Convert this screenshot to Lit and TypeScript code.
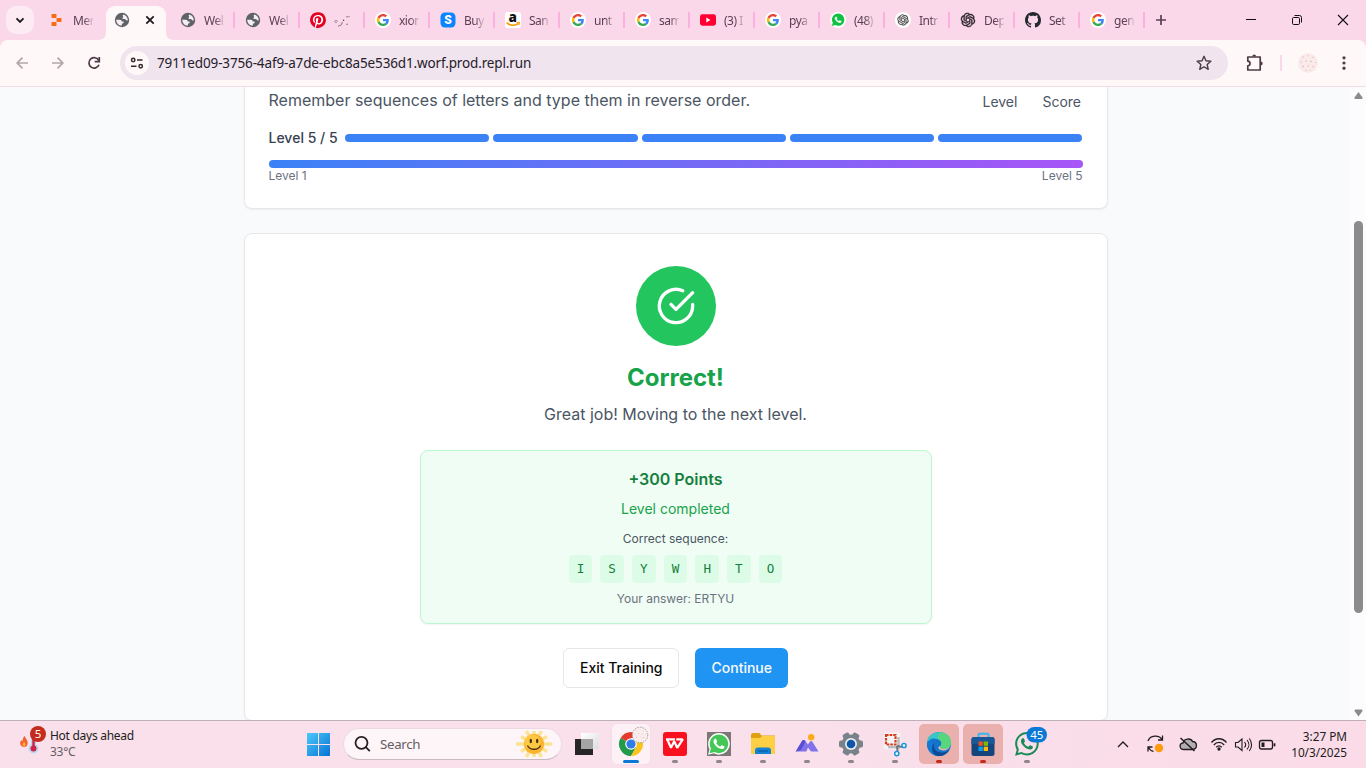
import { LitElement, html, css, svg, TemplateResult } from "lit";
import { customElement } from "lit/decorators.js";

const WA =
  "M17.472 14.382c-.297-.149-1.758-.867-2.03-.967-.273-.099-.471-.148-.67.15-.197.297-.767.966-.94 1.164-.173.199-.347.223-.644.075-.297-.15-1.255-.463-2.39-1.475-.883-.788-1.48-1.761-1.653-2.059-.173-.297-.018-.458.13-.606.134-.133.298-.347.446-.52.149-.174.198-.298.298-.497.099-.198.05-.371-.025-.52-.075-.149-.669-1.612-.916-2.207-.242-.579-.487-.5-.669-.51-.173-.008-.371-.01-.57-.01-.198 0-.52.074-.792.372-.272.297-1.04 1.016-1.04 2.479 0 1.462 1.065 2.875 1.213 3.074.149.198 2.096 3.2 5.077 4.487.709.306 1.262.489 1.694.625.712.227 1.36.195 1.871.118.571-.085 1.758-.719 2.006-1.413.248-.694.248-1.289.173-1.413-.074-.124-.272-.198-.57-.347";
const WA_RING =
  "m-5.421 7.403h-.004a9.87 9.87 0 01-5.031-1.378l-.361-.214-3.741.982.998-3.648-.235-.374a9.86 9.86 0 01-1.51-5.26c.001-5.45 4.436-9.884 9.888-9.884 2.64 0 5.122 1.03 6.988 2.898a9.825 9.825 0 012.893 6.994c-.003 5.45-4.437 9.884-9.885 9.884m8.413-18.297A11.815 11.815 0 0012.05 0C5.495 0 .16 5.335.157 11.892c0 2.096.547 4.142 1.588 5.945L.057 24l6.305-1.654a11.882 11.882 0 005.683 1.448h.005c6.554 0 11.89-5.335 11.893-11.893a11.821 11.821 0 00-3.48-8.413z";
const WA_BODY =
  "M12.05 0C5.495 0 .16 5.335.157 11.892c0 2.096.547 4.142 1.588 5.945L.057 24l6.305-1.654a11.882 11.882 0 005.688 1.448c6.554 0 11.89-5.335 11.893-11.893A11.821 11.821 0 0012.05 0z";
const OPENAI =
  "M22.2819 9.8211a5.9847 5.9847 0 0 0-.5157-4.9108 6.0462 6.0462 0 0 0-6.5098-2.9A6.0651 6.0651 0 0 0 4.9807 4.1818a5.9847 5.9847 0 0 0-3.9977 2.9 6.0462 6.0462 0 0 0 .7427 7.0966 5.98 5.98 0 0 0 .511 4.9107 6.051 6.051 0 0 0 6.5146 2.9001A5.9847 5.9847 0 0 0 13.2599 24a6.0557 6.0557 0 0 0 5.7718-4.2058 5.9894 5.9894 0 0 0 3.9977-2.9001 6.0557 6.0557 0 0 0-.7475-7.073zm-9.022 12.6081a4.4755 4.4755 0 0 1-2.8764-1.0408l.1419-.0804 4.7783-2.7582a.7948.7948 0 0 0 .3927-.6813v-6.7369l2.02 1.1686a.071.071 0 0 1 .038.052v5.5826a4.504 4.504 0 0 1-4.4945 4.4944zm-9.6607-4.1254a4.4708 4.4708 0 0 1-.5346-3.0137l.142.0852 4.783 2.7582a.7712.7712 0 0 0 .7806 0l5.8428-3.3685v2.3324a.0804.0804 0 0 1-.0332.0615L9.74 19.9502a4.4992 4.4992 0 0 1-6.1408-1.6464zM2.3408 7.8956a4.485 4.485 0 0 1 2.3655-1.9728V11.6a.7664.7664 0 0 0 .3879.6765l5.8144 3.3543-2.0201 1.1685a.0757.0757 0 0 1-.071 0l-4.8303-2.7865A4.504 4.504 0 0 1 2.3408 7.872zm16.5963 3.8558L13.1038 8.364 15.1192 7.2a.0757.0757 0 0 1 .071 0l4.8303 2.7913a4.4944 4.4944 0 0 1-.6765 8.1042v-5.6772a.79.79 0 0 0-.407-.667zm2.0107-3.0231l-.142-.0852-4.7735-2.7818a.7759.7759 0 0 0-.7854 0L9.409 9.2297V6.8974a.0662.0662 0 0 1 .0284-.0615l4.8303-2.7866a4.4992 4.4992 0 0 1 6.6802 4.66zM8.3065 12.863l-2.02-1.1638a.0804.0804 0 0 1-.038-.0567V6.0742a4.4992 4.4992 0 0 1 7.3757-3.4537l-.142.0805L8.704 5.459a.7948.7948 0 0 0-.3927.6813zm1.0976-2.3654l2.602-1.4998 2.6069 1.4998v2.9994l-2.5974 1.4997-2.6067-1.4997Z";

const disc = svg`<circle cx="8" cy="8" r="8" fill="#fff"/>`;

/* Favicons share a 16x16 box. */
const fav: Record<string, TemplateResult> = {
  replit: svg`<g fill="#f56c12"><rect x="2.500" y="2" width="5" height="4" rx=".8"/><rect x="7.500" y="6" width="5" height="4" rx=".8"/><rect x="2.500" y="10" width="5" height="4" rx=".8"/></g>`,
  globe: svg`<circle cx="8" cy="8" r="7.200" fill="#5f6368"/><path d="M9.200 2.600c2.600.6 4.600 2.900 4.600 5.600-.8.500-1.700.300-2.200-.6-.5-.9-1.300-.6-2.400-.7-.9-.1-1-1.100-.2-1.600.7-.5-.4-1.100-.3-1.700z" fill="#f6eef2"/><path d="M2.200 7.700h3.600c1.500 0 2 .9 1.900 1.900h1.500c.8.300.700 1.300 0 1.600l-1.300.5v1.900C4.700 13.600 2.200 11 2.200 7.700z" fill="#f6eef2"/>`,
  pinterest: svg`<circle cx="8" cy="8" r="8" fill="#fff"/><g transform="scale(.6667)"><path fill="#e60023" d="M12.017 0C5.396 0 .029 5.367.029 11.987c0 5.079 3.158 9.417 7.618 11.162-.105-.949-.199-2.403.041-3.439.219-.937 1.406-5.957 1.406-5.957s-.359-.72-.359-1.781c0-1.663.967-2.911 2.168-2.911 1.024 0 1.518.769 1.518 1.688 0 1.029-.653 2.567-.992 3.992-.285 1.193.6 2.165 1.775 2.165 2.128 0 3.768-2.245 3.768-5.487 0-2.861-2.063-4.869-5.008-4.869-3.41 0-5.409 2.562-5.409 5.199 0 1.033.394 2.143.889 2.741.099.12.112.225.085.345-.09.375-.293 1.199-.334 1.363-.053.225-.172.271-.401.165-1.495-.69-2.433-2.878-2.433-4.646 0-3.776 2.748-7.252 7.92-7.252 4.158 0 7.392 2.967 7.392 6.923 0 4.135-2.607 7.462-6.233 7.462-1.214 0-2.354-.629-2.758-1.379l-.749 2.848c-.269 1.045-1.004 2.352-1.498 3.146 1.123.345 2.306.535 3.55.535 6.607 0 11.985-5.365 11.985-11.987C23.97 5.39 18.592.026 11.985.026L12.017 0z"/></g>`,
  google: svg`${disc}<g transform="translate(1.9 1.9) scale(.254)"><path fill="#ea4335" d="M24 9.5c3.54 0 6.71 1.22 9.21 3.6l6.85-6.85C35.9 2.38 30.47 0 24 0 14.62 0 6.51 5.38 2.56 13.22l7.98 6.19C12.43 13.72 17.74 9.5 24 9.5z"/><path fill="#4285f4" d="M46.98 24.55c0-1.57-.15-3.09-.38-4.55H24v9.02h12.94c-.58 2.96-2.26 5.48-4.78 7.18l7.73 6c4.51-4.18 7.09-10.36 7.09-17.65z"/><path fill="#fbbc05" d="M10.53 28.59c-.48-1.45-.76-2.99-.76-4.59s.27-3.14.76-4.59l-7.98-6.19C.92 16.46 0 20.12 0 24c0 3.88.92 7.54 2.56 10.78l7.97-6.19z"/><path fill="#34a853" d="M24 48c6.48 0 11.93-2.13 15.89-5.81l-7.73-6c-2.15 1.45-4.92 2.3-8.16 2.3-6.26 0-11.57-4.22-13.47-9.91l-7.98 6.19C6.51 42.62 14.62 48 24 48z"/></g>`,
  s: svg`<rect x=".5" y=".5" width="15" height="15" rx="4.500" fill="#0a84ff"/><text x="8" y="12.200" text-anchor="middle" font-family="Roboto" font-weight="900" font-size="12" fill="#fff">S</text>`,
  amazon: svg`<rect width="16" height="16" rx="2.500" fill="#fff"/><text x="7.800" y="9.800" text-anchor="middle" font-family="Open Sans" font-weight="800" font-size="13.500" fill="#111">a</text><path d="M1.600 10.600c3.400 3.200 8.600 3.400 12 .8" fill="none" stroke="#f90" stroke-width="1.600"/><path d="M11.600 10.600l3-.4-.8 2.800" fill="none" stroke="#f90" stroke-width="1"/>`,
  youtube: svg`<rect y="2.300" width="16" height="11.400" rx="2.400" fill="#ff0033"/><path d="M6.300 5.600v4.800l4.100-2.400z" fill="#fff"/>`,
  whatsapp: svg`${disc}<g transform="translate(1.9 1.5) scale(.52)"><path fill="#0fc143" d=${WA_BODY}/><path fill="#fff" stroke="#fff" stroke-width=".8" d=${WA}/></g>`,
  gptLight: svg`${disc}<g transform="translate(2.4 2.4) scale(.465)"><path fill="#333" stroke="#333" stroke-width=".4" d=${OPENAI}/></g>`,
  gpt: svg`<g transform="translate(.9 .9) scale(.59)"><path fill="#2a2028" stroke="#2a2028" stroke-width=".7" d=${OPENAI}/></g>`,
  github: svg`<path fill="#24292f" d="M8 0C3.58 0 0 3.58 0 8c0 3.54 2.29 6.53 5.47 7.59.4.07.55-.17.55-.38 0-.19-.01-.82-.01-1.49-2.01.37-2.53-.49-2.69-.94-.09-.23-.48-.94-.82-1.13-.28-.15-.68-.52-.01-.53.63-.01 1.08.58 1.23.82.72 1.21 1.87.87 2.33.66.07-.52.28-.87.51-1.07-1.78-.2-3.64-.89-3.64-3.95 0-.87.31-1.59.82-2.15-.08-.2-.36-1.02.08-2.12 0 0 .67-.21 2.2.82.64-.18 1.32-.27 2-.27s1.36.09 2 .27c1.53-1.04 2.2-.82 2.2-.82.44 1.1.16 1.92.08 2.12.51.56.82 1.27.82 2.15 0 3.07-1.87 3.75-3.65 3.95.29.25.54.73.54 1.48 0 1.07-.01 1.93-.01 2.2 0 .21.15.46.55.38A8.01 8.01 0 0 0 16 8c0-4.42-3.58-8-8-8z"/>`,
};

const TABS: [string, string][] = [
  ["globe", "Wel"], ["globe", "Wel"], ["pinterest", "◦◞⁖˙"], ["google", "xion"], ["s", "Buy"],
  ["amazon", "San"], ["google", "unt"], ["google", "sam"], ["youtube", "(3) I"], ["google", "pya"],
  ["whatsapp", "(48)"], ["gptLight", "Intr"], ["gpt", "Dep"], ["github", "Set"], ["google", "gen"],
];

const speckles = svg`<g fill="#eab4b8"><circle cx="5" cy="4" r=".7"/><circle cx="10" cy="2.600" r=".7"/><circle cx="15" cy="4.200" r=".7"/><circle cx="3" cy="9" r=".7"/><circle cx="8" cy="8" r=".8"/><circle cx="13" cy="8.600" r=".8"/><circle cx="17.400" cy="9.400" r=".6"/><circle cx="5" cy="13.400" r=".8"/><circle cx="10.400" cy="13" r=".7"/><circle cx="15.200" cy="13.800" r=".8"/><circle cx="8" cy="17.400" r=".7"/><circle cx="12.400" cy="17" r=".6"/></g>`;

/* Taskbar glyphs share a 40x40 tile, centred on (20,20). */
const apps: { art: TemplateResult; tile?: string; dot?: string }[] = [
  {
    tile: "light",
    dot: "active",
    art: svg`<circle cx="20" cy="20" r="12" fill="#fff"/><path d="M20 20L9.600 14A12 12 0 0 1 30.400 14H20z" fill="#e33b2e"/><path d="M9.600 14A12 12 0 0 0 20 32l5.200-9-5.200-3z" fill="#229a4a"/><path d="M30.400 14A12 12 0 0 1 20 32l5.400-9.200L24 14z" fill="#fcc31d"/><circle cx="20" cy="20" r="5.800" fill="#fff"/><circle cx="20" cy="20" r="4.600" fill="#2f7be8"/><circle cx="29" cy="11" r="7.800" fill="#f9eeee" stroke="#8d8082" stroke-width=".7" stroke-dasharray="1.600 1"/><g transform="translate(22 4) scale(.7)">${speckles}</g>`,
  },
  {
    dot: "idle",
    art: svg`<rect x="8" y="8" width="24" height="24" rx="3" fill="#fb1020"/><path d="M11 15.300h9M12 15l4 8.800 3.200-6.600 3 6.600L27.800 15.300h-6.500" fill="none" stroke="#fff" stroke-width="2.200" stroke-linejoin="bevel"/>`,
  },
  {
    dot: "idle",
    art: svg`<rect x="8" y="8" width="24" height="24" fill="#7c7777"/><g transform="translate(9 9) scale(.91)"><path fill="#fff" d=${WA_BODY}/><g transform="translate(1.700 1.700) scale(.86)"><path fill="#43c757" d=${WA_BODY}/></g><path fill="#fff" d=${WA}/></g>`,
  },
  {
    dot: "idle",
    art: svg`<path d="M8 11a2 2 0 0 1 2-2h6.500l2 2.500H32V20H8z" fill="#dfa111"/><path d="M8 14h9l2-2h12a1 1 0 0 1 1 1v17H8z" fill="#fdcf45"/><path d="M12 30v-3.500a3 3 0 0 1 3-3h10a3 3 0 0 1 3 3V30z" fill="#1582d4"/><path d="M15 27h10" stroke="#0c5ca6" stroke-width="1.200"/>`,
  },
  {
    dot: "idle",
    art: svg`<path d="M8.500 27.500L15 17q1.600-2 3.400 0l2.500 3.500 1.800-2.500q1.500-2 3 .2l5.800 9.300H24l-3-4-1.600 4z" fill="#8272ea"/><path d="M9 27.500L15 17q1.600-2 3.400 0l-2 4.500-2.600 4.500z" fill="#5a4bd0"/><circle cx="24.200" cy="13.200" r="3.200" fill="#fbab1c"/>`,
  },
  {
    dot: "idle",
    art: svg`<g fill="#79828a">${[30, 90, 150].map((a) => svg`<rect x="16.500" y="8" width="7" height="24" rx="1.800" transform=${`rotate(${a} 20 20)`}/>`)}<circle cx="20" cy="20" r="9.400"/></g><circle cx="20" cy="20" r="6" fill="#e9edf0"/><circle cx="20" cy="20" r="4.300" fill="#0c58a8"/>`,
  },
  {
    dot: "idle",
    art: svg`<rect x="8.500" y="8.500" width="17" height="17" rx="2" fill="#f4f2f2"/><rect x="11" y="11" width="9.500" height="9.500" fill="none" stroke="#d83b1c" stroke-width="2.200" stroke-dasharray="2.600 1"/><path d="M23.500 13v12M13 23h12" stroke="#b9bcc0" stroke-width="2.500"/><path d="M22 22l6 1M22 22l.5 5" stroke="#71767b" stroke-width="2"/><circle cx="29" cy="21.500" r="2.100" fill="#fff" stroke="#1995dc" stroke-width="1.500"/><circle cx="21.800" cy="29.600" r="2.100" fill="#fff" stroke="#1995dc" stroke-width="1.500"/>`,
  },
  {
    tile: "alert",
    dot: "warn",
    art: svg`<circle cx="20" cy="20" r="12" fill="#1673c9"/><path d="M8 19C9 4 31 5 32 18c.2 5-3 7-7 7-3 0-5-1.500-3.500-3C23 20 22.500 15 17 15c-5 0-8.500 3-9 4z" fill="#38c6c8"/><path d="M21 8.200C28 9 32 13 32 18c.2 5-3 7-7 7-3 0-5-1.500-3.500-3 2-2.500 1-6-3-7z" fill="#57d67c"/><path d="M13 20c0 7 6 12 13 10.500A12 12 0 0 1 8 20c1-5 7-7 10-4.500-3 0-5 2-5 4.500z" fill="#1479d4"/><path d="M15.500 19c-2 5 1 10 8 9.500 3 0 5-1 7-3-2 4-6 6.500-10.500 6.500-6 0-9.500-8-4.500-13z" fill="#0c4a94"/><path d="M21.500 22c-1.500 1.500.5 3 3.500 3 2 0 4-.5 5.500-2-1 4-9 4.500-11 1.500-.6-1 .6-2.500 2-2.500z" fill="#e9b6b2"/>`,
  },
  {
    tile: "alert",
    dot: "warn",
    art: svg`<path d="M15.500 14v-3.200a1 1 0 0 1 1-1h8a1 1 0 0 1 1 1V14" fill="none" stroke="#36b5ee" stroke-width="2"/><rect x="8.500" y="13" width="23" height="19" rx="2.500" fill="#16457e"/><path d="M8.500 15.500a2.500 2.500 0 0 1 2.500-2.500h18a2.500 2.500 0 0 1 2.500 2.500V20h-23z" fill="#1a5796"/><rect x="15.500" y="17.500" width="4.300" height="4.300" fill="#f25022"/><rect x="20.700" y="17.500" width="4.300" height="4.300" fill="#7fba00"/><rect x="15.500" y="22.700" width="4.300" height="4.300" fill="#00a4ef"/><rect x="20.700" y="22.700" width="4.300" height="4.300" fill="#ffb900"/>`,
  },
  {
    dot: "idle",
    art: svg`<g transform="translate(8 8) scale(.99)"><path fill="#178a55" d=${WA + WA_RING}/></g><rect x="19.500" y="3" width="20.500" height="15.500" rx="7.750" fill="#0a78d6"/><text x="29.800" y="15" text-anchor="middle" font-family="Noto Sans" font-size="11.500" fill="#fff">45</text>`,
  },
];

@customElement("browser-tabs")
class BrowserTabs extends LitElement {
  static styles = css`
    :host { display: flex; height: 40px; background: #fad8e9; font-family: "Noto Sans", sans-serif; font-size: 12px; color: #5b4052; }
    .menu { width: 28px; height: 28px; margin: 6px 5px 0 6px; border-radius: 10px; background: #fdebf4; }
    .tab { box-sizing: border-box; width: 65px; display: flex; align-items: center; padding-left: 10px; }
    .tab svg { flex: none; }
    .name { flex: none; width: 20px; margin: 2px 0 0 8px; overflow: hidden; white-space: nowrap; line-height: 18px; letter-spacing: -0.5px;
      -webkit-mask-image: linear-gradient(90deg, #000 55%, rgba(0, 0, 0, 0.15)); mask-image: linear-gradient(90deg, #000 55%, rgba(0, 0, 0, 0.15)); }
    .sep { width: 2px; height: 16px; margin-left: auto; background: #fbb0df; }
    .current { width: 76px; height: 34px; margin: 6px -4px 0 -6px; }
    .plus { margin: 11px 0 0 7px; }
    .controls { display: flex; margin-left: auto; }
  `;
  render() {
    return html`
      <svg class="menu" viewBox="0 0 28 28"><path d="M10.500 12.300l3.500 3.500 3.500-3.500" fill="none" stroke="#1f1a1e" stroke-width="1.900"/></svg>
      <div class="tab"><svg width="16" height="16">${fav.replit}</svg><span class="name">Mer</span></div>
      <svg class="current" viewBox="0 0 76 34"><path d="M0 34q8 0 8-8V9a9 9 0 0 1 9-9h42a9 9 0 0 1 9 9v17q0 8 8 8z" fill="#fff8f8"/><svg x="16" y="6" width="16" height="16">${fav.globe}</svg><path d="M48.300 10.300l7.400 7.400M55.700 10.300l-7.400 7.400" stroke="#1f1a1e" stroke-width="1.800"/></svg>
      ${TABS.map(([icon, name]) => html`<div class="tab"><svg width="16" height="16">${fav[icon]}</svg><span class="name">${name}</span><span class="sep"></span></div>`)}
      <svg class="plus" width="18" height="18"><path d="M9 4v10M4 9h10" stroke="#5b4052" stroke-width="1.700"/></svg>
      <div class="controls">
        <svg width="138" height="40" fill="none" stroke="#111"><path d="M18 19.500h10"/><rect x="64.500" y="17.500" width="7" height="7" rx="1.200"/><path d="M66.500 15.500h5a2 2 0 0 1 2 2v5"/><path d="M110 15l10 10M120 15l-10 10" stroke-width="1.100"/></svg>
      </div>
    `;
  }
}

@customElement("browser-toolbar")
class BrowserToolbar extends LitElement {
  static styles = css`
    :host { display: block; background: #fad8e9; height: 47px; }
    .bar { box-sizing: border-box; height: 47px; display: flex; align-items: flex-start; background: #fff8f8; border-bottom: 1px solid #eedde4; border-radius: 8px 8px 0 0; }
    .nav { flex: none; }
    .url { box-sizing: border-box; width: 1108px; height: 34px; margin-top: 6px; border-radius: 17px; background: #f0e4ee; display: flex; align-items: center; padding: 0 14px 0 5px; font: 13.5px/20px "Noto Sans", sans-serif; color: #26202a; }
    .text { margin-left: 8px; letter-spacing: -0.14px; }
    .star { margin-left: auto; }
  `;
  render() {
    return html`<div class="bar">
      <svg class="nav" width="120" height="46" fill="none" stroke-width="1.700">
        <path d="M28 23H17.500M22.500 17.700L17.200 23l5.300 5.300M52 23h10.500M57.500 17.700l5.300 5.300-5.300 5.300" stroke="#b0a6ab"/>
        <path d="M98.800 20.500A5.200 5.200 0 1 0 99 24.800" stroke="#4d3a47" /><path d="M99.300 17v4.600h-4.600" stroke="#4d3a47"/>
      </svg>
      <div class="url">
        <svg width="24" height="24"><circle cx="12" cy="12" r="12" fill="#fff8f8"/><g fill="none" stroke="#33272f" stroke-width="1.500"><circle cx="8.200" cy="9" r="1.700"/><path d="M12 9h5.500M6 15.200h5.500"/><circle cx="15.700" cy="15.200" r="1.700"/></g></svg>
        <span class="text">7911ed09-3756-4af9-a7de-ebc8a5e536d1.worf.prod.repl.run</span>
        <svg class="star" width="20" height="20"><path d="M10 3.300l1.950 4.500 4.900.450-3.700 3.250 1.100 4.800L10 13.750 5.750 16.300l1.100-4.800-3.700-3.250 4.900-.450z" fill="none" stroke="#4d3a47" stroke-width="1.400" stroke-linejoin="round"/></svg>
      </div>
      <svg class="nav" width="138" height="46">
        <path d="M19.800 17h12.400v13H19.800v-4.200c3-.2 3-4.400 0-4.600z" fill="none" stroke="#4d3a47" stroke-width="1.700" stroke-linejoin="round"/><path d="M24.300 16.500a1.900 1.900 0 0 1 3.800 0zM32.800 21.500a1.900 1.900 0 0 1 0 3.800z" fill="#4d3a47"/>
        <rect x="52" y="15" width="2" height="16" fill="#fbd7ea"/>
        <circle cx="80" cy="23" r="10" fill="#faebeb"/><g transform="translate(70 13)">${speckles}</g>
        <g fill="#4d3a47"><circle cx="116" cy="17.800" r="1.600"/><circle cx="116" cy="23" r="1.600"/><circle cx="116" cy="28.200" r="1.600"/></g>
      </svg>
    </div>`;
  }
}

@customElement("training-page")
class TrainingPage extends LitElement {
  static styles = css`
    :host { display: flex; height: 633px; overflow: hidden; background: #f9fafb; font-family: Inter, "Liberation Sans", sans-serif; }
    main { flex: 1; height: 633px; overflow: hidden; }
    .card { box-sizing: border-box; width: 864px; margin: 0 auto; background: #fff; border: 1px solid #e5e7eb; border-radius: 8px; box-shadow: 0 1px 2px rgba(0, 0, 0, 0.05); }
    .summary { height: 122px; border-top: 0; border-radius: 0 0 8px 8px; padding: 1px 24px 0; }
    .row { display: flex; justify-content: space-between; }
    .lead { font-size: 16px; line-height: 24px; color: #4b5563; }
    .stats { display: flex; gap: 25px; padding: 4px 1.5px 0 0; font-size: 14px; line-height: 20px; color: #4b5563; }
    .steps { display: flex; align-items: center; gap: 7.4px; margin-top: 16px; font-size: 14px; line-height: 20px; font-weight: 500; color: #374151; }
    .segments { flex: 1; display: flex; gap: 4px; }
    .segments i { flex: 1; height: 8px; border-radius: 4px; background: #3b82f6; }
    .progress { height: 8px; margin-top: 12px; border-radius: 4px; background: linear-gradient(90deg, #3b82f6, #a855f7); }
    .ends { font-size: 12px; line-height: 16px; color: #6b7280; }
    .result { height: 488px; margin-top: 24px; padding-top: 32px; display: flex; flex-direction: column; align-items: center; }
    .badge { display: block; width: 80px; height: 80px; flex: none; border-radius: 50%; background: #22c55e; }
    h2 { margin: 16px 0 8px; font-size: 24px; line-height: 32px; font-weight: 700; color: #16a34a; }
    .points { box-sizing: border-box; width: 512px; height: 174px; margin: 24px 0; padding: 16px; border: 1px solid #bbf7d0; border-radius: 8px; background: #f0fdf4; box-shadow: 0 1px 2px rgba(0, 0, 0, 0.05); text-align: center; font-size: 12px; line-height: 16px; }
    .total { font-size: 16px; line-height: 24px; font-weight: 600; color: #15803d; }
    .done { margin: 8px 0 12px; font-size: 14px; line-height: 20px; color: #16a34a; }
    .hint { color: #4b5563; }
    .letters { display: flex; justify-content: center; gap: 8px; margin: 8px 0; }
    .letters span { width: 23.7px; line-height: 28px; border-radius: 4px; background: #dcfce7; color: #15803d; font-family: "DejaVu Sans Mono", monospace; font-size: 12.6px; }
    .answer { color: #6b7280; }
    .actions { display: flex; gap: 16px; }
    button { box-sizing: border-box; height: 40px; padding: 0 16px; border: 1px solid #e5e7eb; border-radius: 6px; background: #fff; color: #0c0a09; font: 500 14px/20px Inter, sans-serif; }
    .primary { border: 0; background: #2094f3; color: #f8fafc; }
    .scroll { flex: none; width: 15px; background: #fcfcfc; display: flex; flex-direction: column; align-items: center; }
    .scroll svg { display: block; }
    .thumb { width: 9px; height: 392px; margin: 117px 0 90px 0; border-radius: 4.5px; background: #8b8b8b; }
  `;
  render() {
    return html`
      <main>
        <section class="card summary">
          <div class="row"><span class="lead">Remember sequences of letters and type them in reverse order.</span><div class="stats"><span>Level</span><span>Score</span></div></div>
          <div class="steps">Level 5 / 5<div class="segments"><i></i><i></i><i></i><i></i><i></i></div></div>
          <div class="progress"></div>
          <div class="row ends"><span>Level 1</span><span>Level 5</span></div>
        </section>
        <section class="card result">
          <svg class="badge" viewBox="0 0 80 80"><g transform="translate(20 20) scale(1.6667)" fill="none" stroke="#fff" stroke-width="2" stroke-linecap="round" stroke-linejoin="round"><path d="M22 11.080V12a10 10 0 1 1-5.930-9.140"/><path d="m9 11 3 3L22 4"/></g></svg>
          <h2>Correct!</h2>
          <div class="lead">Great job! Moving to the next level.</div>
          <div class="points">
            <div class="total">+300 Points</div>
            <div class="done">Level completed</div>
            <div class="hint">Correct sequence:</div>
            <div class="letters">${[..."ISYWHTO"].map((c) => html`<span>${c}</span>`)}</div>
            <div class="answer">Your answer: ERTYU</div>
          </div>
          <div class="actions"><button>Exit Training</button><button class="primary">Continue</button></div>
        </section>
      </main>
      <div class="scroll">
        <svg width="15" height="17"><path d="M7.500 5l4 5.500q.3 1.500-1 1.500h-6q-1.300 0-1-1.500z" fill="#8b8b8b"/></svg>
        <div class="thumb"></div>
        <svg width="15" height="17"><path d="M7.500 13.500l4-5.500q.3-1.500-1-1.500h-6q-1.300 0-1 1.500z" fill="#8b8b8b"/></svg>
      </div>
    `;
  }
}

@customElement("task-bar")
class TaskBar extends LitElement {
  static styles = css`
    :host { box-sizing: border-box; display: flex; align-items: flex-start; height: 48px; border-top: 1px solid #bfb0b8; background: linear-gradient(90deg, #fae0ea, #f9e0ea 60%, #fbdbe8); font-family: "Noto Sans", sans-serif; font-size: 12px; color: #211c20; }
    svg { display: block; flex: none; }
    .weather { width: 287px; display: flex; padding-left: 16px; box-sizing: border-box; }
    .lines { padding: 7px 0 0 2px; line-height: 16px; font-size: 12px; letter-spacing: -0.28px; }
    .dim { color: #665d63; }
    .start { margin: 12px 0 0 19px; }
    .search { box-sizing: border-box; width: 219px; height: 32px; margin: 7px 0 0 12px; border: 1px solid #ecd9e1; border-bottom-color: #c9bac2; border-radius: 16px; background: #fdf5f8; display: flex; align-items: center; padding: 0 6px 0 9px; font-size: 13.3px; letter-spacing: -0.3px; color: #655c62; }
    .search span { flex: 1; margin-left: 9px; }
    .view { margin: 3px 1px 0 4px; }
    .app { width: 44px; padding-top: 3px; display: flex; flex-direction: column; align-items: center; }
    .app svg { overflow: visible; border-radius: 5px; }
    .light { background: #fdf1f6; box-shadow: 0 0 0 1px #f3dfe8; }
    .alert { background: #e9b0ae; }
    .dot { width: 6px; height: 3px; margin-top: -4px; z-index: 1; border-radius: 2px; background: #8e848a; }
    .dot.active { width: 16px; background: #0a78d6; }
    .dot.warn { background: #c42b1c; }
    .tray { margin-left: auto; }
    .clock { width: 64px; margin: 7px 19px 0 4px; line-height: 16px; text-align: right; font-size: 11.8px; letter-spacing: -0.02px; white-space: nowrap; }
  `;
  render() {
    const rays = Array.from({ length: 12 }, (_, i) => i * 30);
    return html`
      <div class="weather">
        <svg width="32" height="40"><path d="M8 26c-4-.5-5-4-2.500-7 .3 1 .8 1.200 1 1.200C6.500 17.500 7.500 16 9 15c-.2 2 3 4 2.700 7.500C11.500 25 10 26 8 26z" fill="#f0632c"/><path d="M8 25.500c-1.800-.5-2-2.500 0-4.500 1.800 1.500 2 4 0 4.500z" fill="#ffb347"/><circle cx="17.500" cy="27.500" r="5" fill="#b9d9f2"/><rect x="15" y="10" width="5" height="18" rx="2.500" fill="#b9d9f2"/><circle cx="17.500" cy="27.500" r="3" fill="#cf2246"/><rect x="16.300" y="14" width="2.400" height="13" fill="#cf2246"/><circle cx="22" cy="13" r="8" fill="#c42b1c"/><text x="22" y="17" text-anchor="middle" font-size="11.500" fill="#fff">5</text></svg>
        <div class="lines">Hot days ahead<br /><span class="dim">33°C</span></div>
      </div>
      <svg class="start" width="25" height="24"><defs><linearGradient id="w" x2="1" y2="1"><stop stop-color="#4cc8fb"/><stop offset="1" stop-color="#0873d4"/></linearGradient></defs><path d="M1 0h11v11H1zM13 0h11v11H13zM1 12h11v11H1zM13 12h11v11H13z" fill="url(#w)"/></svg>
      <div class="search">
        <svg width="18" height="18" fill="none" stroke="#241e22" stroke-width="1.800"><circle cx="8.500" cy="7.800" r="6"/><path d="M12.800 12.200l4 4"/></svg>
        <span>Search</span>
        <svg width="42" height="28" viewBox="0 0 42 28"><g stroke="#fbe48f" stroke-width="3.500">${rays.map((a) => svg`<path d=${a % 180 === 0 ? "M31 14h8" : a % 180 === 90 ? "M31 14h3" : "M31 14h5"} transform=${`rotate(${a} 21 14)`}/>`)}</g><circle cx="21" cy="14" r="10.200" fill="#fbb42e"/><circle cx="19.500" cy="12.500" r="7.800" fill="#fdc944"/><ellipse cx="17.800" cy="11" rx="1.200" ry="2.200" fill="#4b2e0b"/><ellipse cx="24.200" cy="11" rx="1.200" ry="2.200" fill="#4b2e0b"/><path d="M14.500 15.500c2 5 11 5 13 0" fill="none" stroke="#4b2e0b" stroke-width="1.300"/></svg>
      </div>
      <svg class="view" width="42" height="40"><defs><linearGradient id="v" x2="1" y2="1"><stop stop-color="#fff"/><stop offset="1" stop-color="#dcdcdc"/></linearGradient></defs><rect x="15" y="9" width="18" height="16" fill="url(#v)"/><rect x="9" y="15" width="18" height="16" fill="#262626"/><path d="M15 15h12v10H15z" fill="#a5a5a5"/></svg>
      ${apps.map((a) => html`<div class="app"><svg class=${a.tile ?? ""} width=${a.tile === "light" ? 38 : 40} height="40" viewBox=${a.tile === "light" ? "1 0 38 40" : "0 0 40 40"}>${a.art}</svg><i class="dot ${a.dot}"></i></div>`)}
      <svg class="tray" width="168" height="46" fill="none" stroke="#211c20" stroke-width="1.300">
        <path d="M7 26l5-5 5 5"/>
        <path d="M37 20c2-6 11-6.500 14-1.500M51.500 14.500v4.500H47M37 30.500V26h4.500M37.500 26.500c1 2 3 3.500 5 3.800" /><circle cx="48" cy="27" r="4.200" fill="#ff9a0c" stroke="none"/>
        <path d="M73 28.500c-5 0-5-6-1-6.500 1-5 8-5 9.500-1.500 5 0 5.500 8 0 8z" fill="#b3adb0"/><path d="M69.500 17l14 13" stroke-width="1.500"/>
        <path d="M100.500 21.500c4-5 11-5 15 0M102.800 24c3-3.500 7.400-3.500 10.400 0M105.200 26.300c1.700-1.800 3.900-1.800 5.600 0"/><circle cx="108" cy="28" r="1" fill="#211c20"/>
        <path d="M124.500 21.500h2.500l4-3.500v11.500l-4-3.500h-2.500zM133.500 21c1.300 1.500 1.300 4 0 5.500M136 19c2.500 2.800 2.500 6.700 0 9.500M138.300 17.500c3 3.500 3 9 0 12.500" stroke-width="1.100"/>
        <rect x="148.500" y="19.500" width="13" height="8.500" rx="2"/><path d="M150.500 21.500h3v4.500h-3z" fill="#211c20" stroke="none"/><path d="M163.500 22.300v3" stroke-width="1.800"/>
      </svg>
      <div class="clock">3:27 PM<br />10/3/2025</div>
    `;
  }
}

@customElement("app-root")
class AppRoot extends LitElement {
  static styles = css`
    :host { display: flex; flex-direction: column; width: 1366px; height: 768px; overflow: hidden; }
  `;
  render() {
    return html`<browser-tabs></browser-tabs><browser-toolbar></browser-toolbar><training-page></training-page><task-bar></task-bar>`;
  }
}
